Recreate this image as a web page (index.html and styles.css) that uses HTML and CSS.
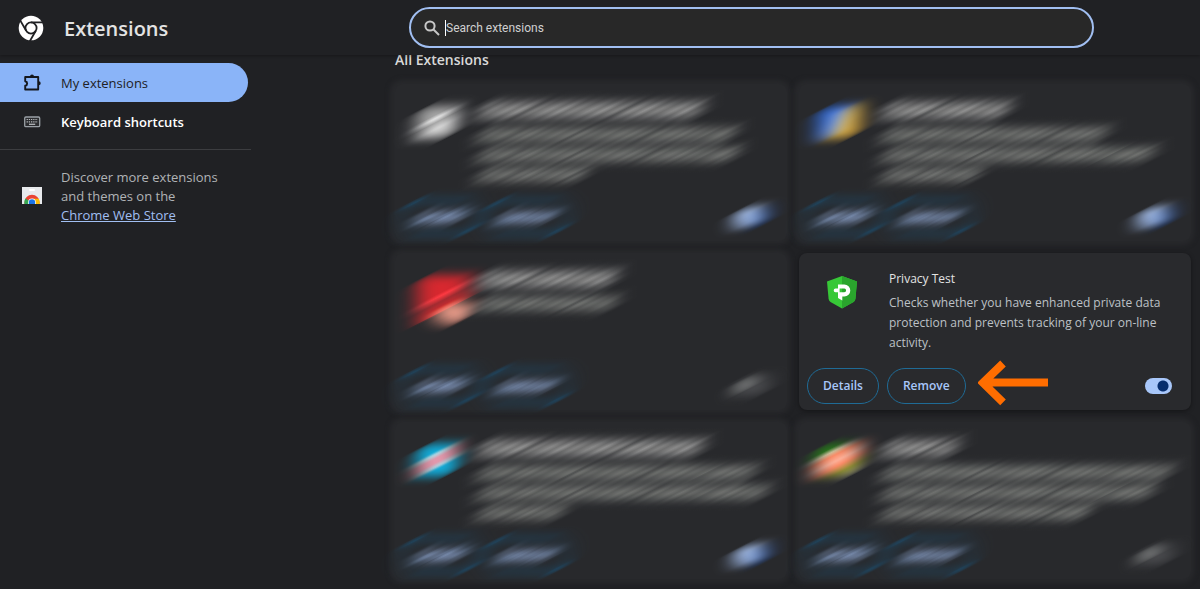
FILE: index.html
```html
<!DOCTYPE html>
<html lang="en">
<head>
<meta charset="utf-8">
<title>Extensions</title>
<link rel="stylesheet" href="styles.css">
</head>
<body>
<svg class="defs" aria-hidden="true">
  <filter id="streak" x="-20%" y="-60%" width="140%" height="220%" color-interpolation-filters="sRGB">
    <feGaussianBlur stdDeviation="11 0"/>
  </filter>
</svg>
<div class="app">
  <header class="topbar">
    <div class="brand">
      <svg class="logo" viewBox="0 0 26 26" aria-hidden="true">
        <circle cx="13" cy="13" r="12.3" fill="#fff"/>
        <g fill="none" stroke="#202124" stroke-width="1.8">
          <circle cx="13" cy="13" r="5.6"/>
          <path d="M13 7.4H25M8.2 15.8L2.2 5.4M17.8 15.8L11.8 26.2"/>
        </g>
      </svg>
      <h1 class="title">Extensions</h1>
    </div>
    <label class="search">
      <svg class="search-icon" viewBox="0 0 16 16" aria-hidden="true"><circle cx="6" cy="6" r="4.6"/><path d="M9.5 9.5L15 15"/></svg>
      <span class="caret"></span>
      <input class="search-input" type="search" placeholder="Search extensions" aria-label="Search extensions">
    </label>
  </header>

  <nav class="sidebar">
    <a class="nav-item active" href="#">
      <svg class="nav-icon" viewBox="0 0 20 20" aria-hidden="true"><path d="M3.200 4H16.200V16.500H3.200v-3.700c2.600-.6 2.600-4 0-4.600z" fill="none" stroke="#14171c" stroke-width="1.900" stroke-linejoin="round"/><path d="M8 3.500a2 2 0 0 1 4 0zM16.700 8.200a2 2 0 0 1 0 4z" fill="#14171c"/></svg>
      My extensions
    </a>
    <a class="nav-item" href="#">
      <svg class="nav-icon" viewBox="0 0 20 20" aria-hidden="true"><rect x="2.700" y="5" width="15" height="9.600" rx="1.200" fill="#2b2c2f" stroke="#9aa0a6" stroke-width="1.300"/><path d="M4.600 7.500h11.200M4.600 9.800h11.200" stroke="#b4b7bb" stroke-width="1.200" stroke-dasharray="1.300 .9"/><path d="M7 12.300h6.200" stroke="#b4b7bb" stroke-width="1.300"/></svg>
      <strong class="strong">Keyboard shortcuts</strong>
    </a>
    <div class="discover">
      <svg class="nav-icon" viewBox="0 0 20 20" aria-hidden="true">
        <defs><clipPath id="store"><path d="M0 0h20v17H0z"/></clipPath></defs>
        <g clip-path="url(#store)">
          <path d="M0 0h20v17H0z" fill="#e8eaed"/>
          <rect x="7" y="2" width="6" height="2" rx="1" fill="#fff"/>
          <circle cx="10" cy="15.400" r="7.600" fill="#ea4335"/>
          <path d="M10 15.400L3.400 11.600A7.600 7.600 0 0 0 4 20z" fill="#34a853"/>
          <path d="M10 11.800h6.700A7.600 7.600 0 0 1 15 21l-5-5z" fill="#fbbc04"/>
          <circle cx="10" cy="15.400" r="3.900" fill="#fff"/>
          <circle cx="10" cy="15.400" r="3.200" fill="#1a73e8"/>
        </g>
      </svg>
      <p class="discover-text">Discover more extensions and themes on the <a href="#">Chrome Web Store</a></p>
    </div>
  </nav>

  <main class="main">
    <h2 class="section-title">All Extensions</h2>
    <div class="cards">
      <article class="card soft"><div class="tilt"><div class="level">
        <span class="avatar silver"></span>
        <div class="copy"><i class="bar name w76"></i><i class="bar w87"></i><i class="bar w88"></i><i class="bar w36"></i></div>
        <div class="actions"><button class="btn">Details</button><button class="btn">Remove</button><input class="toggle" type="checkbox" aria-label="Enabled" checked></div>
      </div></div></article>

      <article class="card soft"><div class="tilt"><div class="level">
        <span class="avatar bluegold"></span>
        <div class="copy"><i class="bar name w42"></i><i class="bar w76"></i><i class="bar w92"></i><i class="bar w32"></i></div>
        <div class="actions"><button class="btn">Details</button><button class="btn">Remove</button><input class="toggle" type="checkbox" aria-label="Enabled" checked></div>
      </div></div></article>

      <article class="card soft"><div class="tilt"><div class="level">
        <span class="avatar red"></span>
        <div class="copy"><i class="bar name w46"></i><i class="bar w46"></i></div>
        <div class="actions"><button class="btn">Details</button><button class="btn">Remove</button><input class="toggle" type="checkbox" aria-label="Enabled"></div>
      </div></div></article>

      <article class="card">
        <svg class="avatar" viewBox="0 0 32 34" aria-hidden="true">
          <path d="M16 1L31 6.500 29.400 24Q29 26 27.500 27L16 33.500 4.500 27Q3 26 2.600 24L1 6.500z" fill="#37c837"/>
          <path d="M16 1L31 6.500 29.400 24Q29 26 27.500 27L16 33.500z" fill="#2aa52d"/>
          <path fill-rule="evenodd" d="M12 9.500H18.300a6 6 0 0 1 0 12H16.300V25.500L12 23V17.200H9.500a1.800 1.800 0 0 1 0-3.600H12zM13.600 13.600V17.200H18.300a1.800 1.800 0 0 0 0-3.600z" fill="#fff"/>
        </svg>
        <div class="copy">
          <h3 class="card-name">Privacy Test</h3>
          <p class="card-desc">Checks whether you have enhanced private data protection and prevents tracking of your on-line activity.</p>
        </div>
        <div class="actions">
          <button class="btn">Details</button>
          <span class="pointed">
            <button class="btn">Remove</button>
            <svg class="arrow" viewBox="0 0 70 46" aria-hidden="true"><path d="M70 22.500H8M25 3.500L5 22.800l20 19.500" fill="none" stroke="#ff6d00" stroke-width="8"/></svg>
          </span>
          <input class="toggle" type="checkbox" aria-label="Privacy Test enabled" checked>
        </div>
      </article>

      <article class="card soft"><div class="tilt"><div class="level">
        <span class="avatar cyan"></span>
        <div class="copy"><i class="bar name w76"></i><i class="bar w94"></i><i class="bar w98"></i><i class="bar w28"></i></div>
        <div class="actions"><button class="btn">Details</button><button class="btn">Remove</button><input class="toggle" type="checkbox" aria-label="Enabled" checked></div>
      </div></div></article>

      <article class="card soft"><div class="tilt"><div class="level">
        <span class="avatar salmon"></span>
        <div class="copy"><i class="bar name w24"></i><i class="bar w98"></i><i class="bar w92"></i><i class="bar w70"></i></div>
        <div class="actions"><button class="btn">Details</button><button class="btn">Remove</button><input class="toggle" type="checkbox" aria-label="Enabled"></div>
      </div></div></article>
    </div>
  </main>
</div>
</body>
</html>
```

FILE: styles.css
```css
* { box-sizing: border-box; }

body {
  margin: 0;
  background: #202124;
  color: #e3e3e3;
  font: 13px/20px "Open Sans", "Noto Sans", sans-serif;
}

h1, h2, h3, p { margin: 0; }

.defs { position: absolute; width: 0; height: 0; }

.app {
  display: grid;
  grid-template: 55px minmax(0, 1fr) / 251px minmax(0, 1fr);
  height: 100vh;
  overflow: hidden;
}

/* Top bar */
.topbar {
  grid-column: 1 / -1;
  display: flex;
  align-items: center;
  padding-right: 106px;
  background: #202124;
  box-shadow: 0 1px 3px rgba(0, 0, 0, .3);
  z-index: 1;
}
.brand {
  display: flex;
  align-items: center;
  gap: 20px;
  flex: 0 0 409px;
  padding-left: 18px;
}
.logo { width: 26px; height: 26px; }
.title { font-size: 20px; line-height: 28px; font-weight: 600; padding-top: 3px; }

.search {
  flex: 1;
  display: flex;
  align-items: center;
  height: 41px;
  padding: 0 16px 0 13px;
  border: 2px solid #a1bff2;
  border-radius: 21px;
  background: #282828;
}
.search-icon {
  width: 16px;
  height: 16px;
  margin-right: 5px;
  fill: none;
  stroke: #c7c7c7;
  stroke-width: 2;
}
.caret { width: 1px; height: 16px; background: #fff; }
.search-input {
  flex: 1;
  min-width: 0;
  padding: 0;
  border: 0;
  outline: 0;
  background: none;
  color: #e3e3e3;
  font: 400 12px/20px Roboto, sans-serif;
}
.search-input::placeholder { color: #d0d0d0; }

/* Sidebar */
.sidebar { padding-top: 8px; }
.nav-item {
  display: flex;
  align-items: center;
  gap: 19px;
  height: 39px;
  margin-right: 3px;
  padding-left: 22px;
  color: #fff;
  text-decoration: none;
  font-size: 13px;
}
.nav-item.active {
  background: #8ab4f8;
  color: #202124;
  border-radius: 0 20px 20px 0;
}
.strong { font-weight: 600; }
.nav-icon { flex: none; width: 20px; height: 20px; }
.discover {
  display: flex;
  align-items: center;
  gap: 19px;
  margin-top: 8px;
  padding: 18px 22px;
  border-top: 1px solid #3c3d40;
}
.discover-text { color: #b0b3b6; font-size: 13px; line-height: 19px; }
.discover-text a { color: #a1bff2; display: block; }

/* Cards */
.main { padding: 0 9px 0 144px; }
.section-title {
  margin: -5px 0 14px;
  font-size: 14px;
  line-height: 20px;
  font-weight: 600;
  color: #dadada;
}
.cards { display: grid; grid-template-columns: 1fr 1fr; gap: 12px; }
.card, .level {
  display: grid;
  grid-template: 105px 36px / 90px minmax(0, 1fr);
  row-gap: 10px;
}
.card {
  height: 157px;
  border-radius: 8px;
  background: #292a2d;
  box-shadow: 0 1px 4px rgba(0, 0, 0, .4);
}
.avatar { width: 32px; height: 34px; margin: 22px 0 0 27px; }
.copy { padding: 16px 20px 0 0; }
.card-name { font-size: 12px; line-height: 20px; font-weight: 500; }
.card-desc {
  margin-top: 4px;
  font-size: 12px;
  line-height: 20px;
  color: #bdc1c6;
}
.actions {
  grid-column: 1 / -1;
  display: flex;
  align-items: center;
  gap: 8px;
  padding: 0 19px 0 8px;
}
.btn {
  height: 36px;
  padding: 0 15px;
  border: 1px solid #1f6b96;
  border-radius: 18px;
  background: none;
  color: #a8c7fa;
  font: 600 12px/20px "Open Sans", sans-serif;
}
.pointed { position: relative; }
.arrow { position: absolute; left: 100%; top: -8px; width: 70px; height: 46px; margin-left: 12px; }
.toggle {
  appearance: none;
  width: 27px;
  height: 16px;
  margin: 0 0 0 auto;
  border-radius: 8px;
  background: radial-gradient(circle at 8px 8px, #a2a5a3 5px, #4c4d50 6px);
}
.toggle:checked { background: radial-gradient(circle at 18px 8px, #062e6f 5px, #a8c7fa 6px); }

/* Obscured cards: contents streaked along a rising diagonal */
.soft {
  display: block;
  box-shadow: -1px 0 5px 4px #28292c;
  background: #28292c;
}
.tilt { height: 100%; transform: rotate(-27deg); filter: url(#streak); }
.level { height: 100%; transform: rotate(27deg); grid-template-columns: 86px minmax(0, 1fr); }
.soft .copy { padding-right: 16px; }
.bar {
  display: block;
  height: 13px;
  margin-top: 7px;
  background:
    repeating-linear-gradient(153deg, transparent 0 19px, rgba(41, 42, 45, .35) 21px, transparent 24px 47px, rgba(41, 42, 45, .4) 48px, transparent 50px 61px),
    repeating-linear-gradient(153deg, #7d7f7c 0, #6b6d6b 3px, #80827f 5px, #646664 8px, #747674 10px, #666866 13px, #7a7c79 17px, #686a68 19px, #7d7f7c 23px);
}
.bar.name {
  height: 16px;
  margin: 2px 0 10px;
  background:
    repeating-linear-gradient(153deg, transparent 0 27px, rgba(41, 42, 45, .4) 29px, transparent 32px 43px),
    repeating-linear-gradient(153deg, #949494 0, #7c7c7c 3px, #9c9c9c 6px, #767676 9px, #8c8c8c 12px, #787878 15px, #949494 19px);
}
.soft .btn {
  border-width: 3px;
  border-color: #1a5277;
  color: #b4d0ff;
  padding: 0 13px;
  font-weight: 800;
  text-shadow: 0 0 2px #8fb0ee, 0 0 2px #7d9cdb;
}
.soft .toggle { width: 32px; height: 18px; }
.soft .toggle:checked { background: linear-gradient(90deg, #b0cdff 60%, #2a4f96 75%); }
.soft .avatar { width: 40px; height: 32px; margin: 22px 0 0 22px; border-radius: 14px 8px; }
.soft .silver { background: linear-gradient(153deg, #999, #aaa 35%, #eee 42%, #aaa 50%, #ddd 62%, #999); }
.soft .bluegold { width: 44px; margin-left: 18px; background: linear-gradient(115deg, #2a62cc 20%, #7ba0ec 48%, #e0bd5c 56%, #b98220); }
.soft .red {
  width: 52px;
  height: 48px;
  background:
    radial-gradient(ellipse 18px 10px at 38px 38px, #ffac98 80%, #f0593a 99%, transparent 100%),
    linear-gradient(153deg, #d8282f 40%, #ff3a42 44%, #a32b30 52%, #e02c30 66%, transparent 67%);
}
.soft .cyan { background: linear-gradient(153deg, #10b4e4 32%, #b8e0ec 38%, #e89cb0 46%, #e89cb0 54%, #b8d6e4 62%, #10b4e4 68%); }
.soft .salmon { width: 46px; margin-left: 16px; background: linear-gradient(153deg, #277d19 22%, #d6c9a2 30%, #ff8d68 38%, #ffb29a 50%, #ff8d68 60%, #9a9a35 74%, #aaa); }
.w24 { width: 24%; }
.w28 { width: 28%; }
.w32 { width: 32%; }
.w36 { width: 36%; }
.w42 { width: 42%; }
.w46 { width: 46%; }
.w70 { width: 70%; }
.w76 { width: 76%; }
.w87 { width: 87%; }
.w88 { width: 88%; }
.w92 { width: 92%; }
.w94 { width: 94%; }
.w98 { width: 98%; }
```
